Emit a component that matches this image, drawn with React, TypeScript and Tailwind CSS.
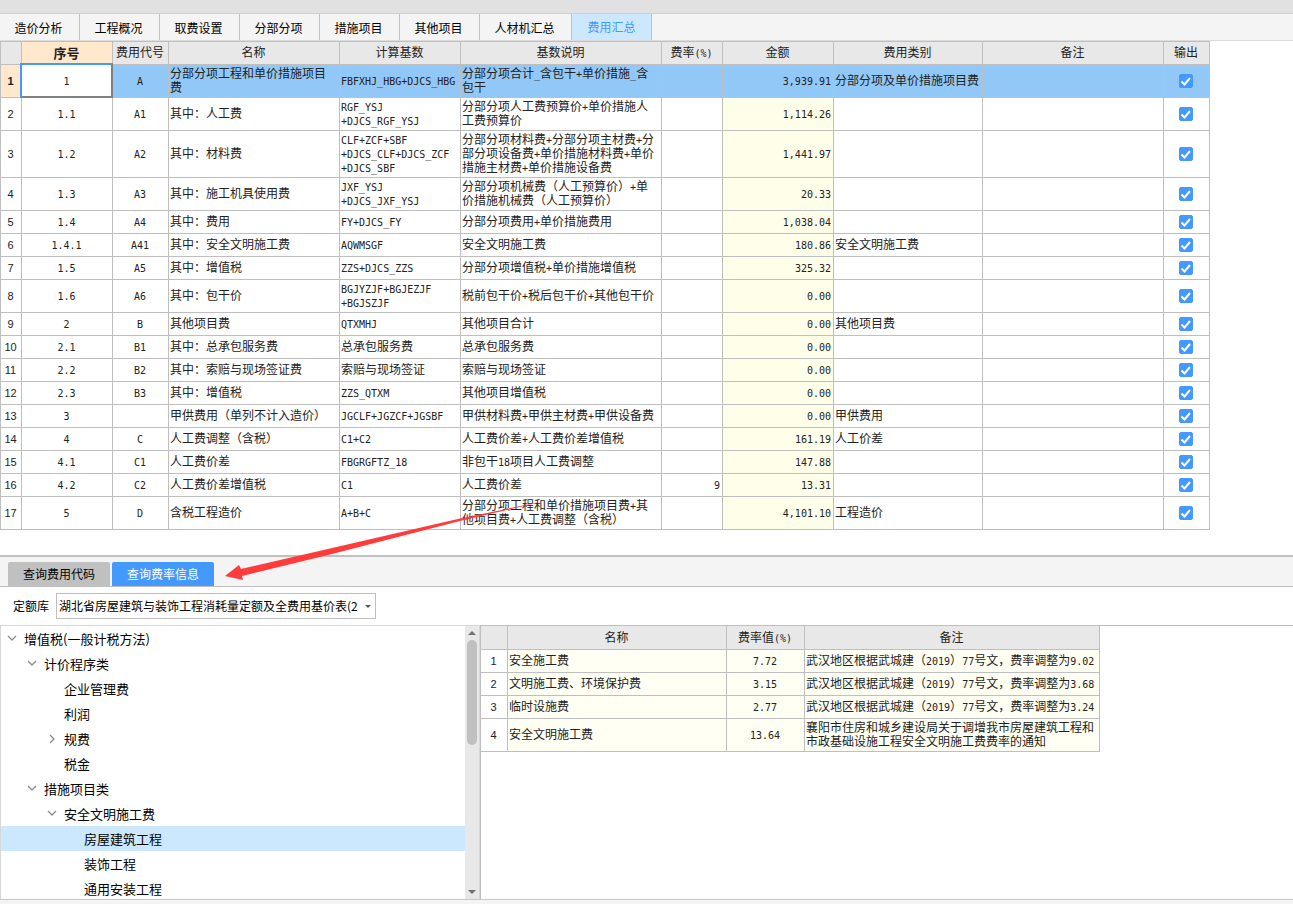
import React, { useState } from "react";
import { clsx } from "clsx";

interface FeeRow {
  no: string;
  code: string;
  name: string;
  base: string;
  desc: string;
  rate?: string;
  amount: string;
  category?: string;
}

interface RateRow {
  name: string;
  rate: string;
  remark: string;
}

interface TreeItem {
  label: string;
  level: number;
  state?: "open" | "closed";
}

const mainTabs = [
  "造价分析",
  "工程概况",
  "取费设置",
  "分部分项",
  "措施项目",
  "其他项目",
  "人材机汇总",
  "费用汇总",
];

const feeHeaders = [
  "费用代号",
  "名称",
  "计算基数",
  "基数说明",
  "费率(%)",
  "金额",
  "费用类别",
  "备注",
  "输出",
];

const feeRows: FeeRow[] = [
  { no: "1", code: "A", name: "分部分项工程和单价措施项目\n费", base: "FBFXHJ_HBG+DJCS_HBG", desc: "分部分项合计_含包干+单价措施_含\n包干", amount: "3,939.91", category: "分部分项及单价措施项目费" },
  { no: "1.1", code: "A1", name: "其中：人工费", base: "RGF_YSJ\n+DJCS_RGF_YSJ", desc: "分部分项人工费预算价+单价措施人\n工费预算价", amount: "1,114.26" },
  { no: "1.2", code: "A2", name: "其中：材料费", base: "CLF+ZCF+SBF\n+DJCS_CLF+DJCS_ZCF\n+DJCS_SBF", desc: "分部分项材料费+分部分项主材费+分\n部分项设备费+单价措施材料费+单价\n措施主材费+单价措施设备费", amount: "1,441.97" },
  { no: "1.3", code: "A3", name: "其中：施工机具使用费", base: "JXF_YSJ\n+DJCS_JXF_YSJ", desc: "分部分项机械费（人工预算价）+单\n价措施机械费（人工预算价）", amount: "20.33" },
  { no: "1.4", code: "A4", name: "其中：费用", base: "FY+DJCS_FY", desc: "分部分项费用+单价措施费用", amount: "1,038.04" },
  { no: "1.4.1", code: "A41", name: "其中：安全文明施工费", base: "AQWMSGF", desc: "安全文明施工费", amount: "180.86", category: "安全文明施工费" },
  { no: "1.5", code: "A5", name: "其中：增值税", base: "ZZS+DJCS_ZZS", desc: "分部分项增值税+单价措施增值税", amount: "325.32" },
  { no: "1.6", code: "A6", name: "其中：包干价", base: "BGJYZJF+BGJEZJF\n+BGJSZJF", desc: "税前包干价+税后包干价+其他包干价", amount: "0.00" },
  { no: "2", code: "B", name: "其他项目费", base: "QTXMHJ", desc: "其他项目合计", amount: "0.00", category: "其他项目费" },
  { no: "2.1", code: "B1", name: "其中：总承包服务费", base: "总承包服务费", desc: "总承包服务费", amount: "0.00" },
  { no: "2.2", code: "B2", name: "其中：索赔与现场签证费", base: "索赔与现场签证", desc: "索赔与现场签证", amount: "0.00" },
  { no: "2.3", code: "B3", name: "其中：增值税", base: "ZZS_QTXM", desc: "其他项目增值税", amount: "0.00" },
  { no: "3", code: "", name: "甲供费用（单列不计入造价）", base: "JGCLF+JGZCF+JGSBF", desc: "甲供材料费+甲供主材费+甲供设备费", amount: "0.00", category: "甲供费用" },
  { no: "4", code: "C", name: "人工费调整（含税）", base: "C1+C2", desc: "人工费价差+人工费价差增值税", amount: "161.19", category: "人工价差" },
  { no: "4.1", code: "C1", name: "人工费价差", base: "FBGRGFTZ_18", desc: "非包干18项目人工费调整", amount: "147.88" },
  { no: "4.2", code: "C2", name: "人工费价差增值税", base: "C1", desc: "人工费价差", rate: "9", amount: "13.31" },
  { no: "5", code: "D", name: "含税工程造价", base: "A+B+C", desc: "分部分项工程和单价措施项目费+其\n他项目费+人工费调整（含税）", amount: "4,101.10", category: "工程造价" },
];

const rateRows: RateRow[] = [
  { name: "安全施工费", rate: "7.72", remark: "武汉地区根据武城建（2019）77号文，费率调整为9.02" },
  { name: "文明施工费、环境保护费", rate: "3.15", remark: "武汉地区根据武城建（2019）77号文，费率调整为3.68" },
  { name: "临时设施费", rate: "2.77", remark: "武汉地区根据武城建（2019）77号文，费率调整为3.24" },
  { name: "安全文明施工费", rate: "13.64", remark: "襄阳市住房和城乡建设局关于调增我市房屋建筑工程和\n市政基础设施工程安全文明施工费费率的通知" },
];

const treeItems: TreeItem[] = [
  { label: "增值税(一般计税方法)", level: 0, state: "open" },
  { label: "计价程序类", level: 1, state: "open" },
  { label: "企业管理费", level: 2 },
  { label: "利润", level: 2 },
  { label: "规费", level: 2, state: "closed" },
  { label: "税金", level: 2 },
  { label: "措施项目类", level: 1, state: "open" },
  { label: "安全文明施工费", level: 2, state: "open" },
  { label: "房屋建筑工程", level: 3 },
  { label: "装饰工程", level: 3 },
  { label: "通用安装工程", level: 3 },
];

const indents = ["pl-1.5", "pl-6.5", "pl-11.5", "pl-16.5"];

const cell =
  "border-r border-b border-[#bfbfbf] py-0 pr-0.5 pl-px align-middle font-normal";

const rowHeight = (...texts: string[]) => {
  const lines = Math.max(...texts.map((text) => text.split("\n").length));
  return ["h-[23px]", "h-[33px]", "h-[47px]"][lines - 1];
};

// Latin runs are half the width of a Chinese character
const Mixed: React.FC<{ text?: string }> = ({ text = "" }) => (
  <span className="block pb-0.5">
    {text.split("\n").map((line, n) => (
      <span key={n} className="block h-3.5 leading-[14px] whitespace-nowrap">
        {line.split(/([\x21-\x7e]+)/).map((part, i) =>
          i % 2 === 1 ? (
            <span
              key={i}
              className="font-['DejaVu_Sans_Mono','Liberation_Mono',monospace] text-[10px] leading-none"
            >
              {part}
            </span>
          ) : (
            part
          )
        )}
      </span>
    ))}
  </span>
);

const OutputCheckbox: React.FC<{ label: string }> = ({ label }) => {
  const [checked, setChecked] = useState(true);

  return (
    <label className="relative mx-auto block w-3.5">
      <input
        type="checkbox"
        aria-label={label}
        checked={checked}
        onChange={() => setChecked(!checked)}
        className="block size-3.5 appearance-none rounded-xs border border-[#4499ff] bg-white checked:bg-[#4499ff]"
      />
      {checked && (
        <svg
          viewBox="0 0 14 14"
          className="pointer-events-none absolute inset-0 size-3.5"
        >
          <path d="M2.5 7.5l3 3 5.5-6.5" fill="none" stroke="white" strokeWidth="2" />
        </svg>
      )}
    </label>
  );
};

const MainTabs: React.FC = () => (
  <nav className="flex h-[27px] shrink-0 border-b border-[#dcdcdc] bg-[#f4f4f4]">
    {mainTabs.map((tab) => (
      <button
        key={tab}
        type="button"
        className={clsx(
          "border-r border-[#bfbfbf] text-xs",
          tab === "人材机汇总" ? "w-[92px]" : "w-20",
          tab === "费用汇总" ? "bg-[#cce8ff] text-[#4499ff]" : "pt-0.5 pr-0.5"
        )}
      >
        {tab}
      </button>
    ))}
  </nav>
);

const FeeTable: React.FC = () => (
  <table className="w-[1210px] table-fixed border-separate border-spacing-0 border-t border-[#bfbfbf] text-xs text-[#222222]">
    <colgroup>
      <col className="w-[22px]" />
      <col className="w-[91px]" />
      <col className="w-[56px]" />
      <col className="w-[171px]" />
      <col className="w-[121px]" />
      <col className="w-[201px]" />
      <col className="w-[61px]" />
      <col className="w-[111px]" />
      <col className="w-[149px]" />
      <col className="w-[181px]" />
      <col className="w-[46px]" />
    </colgroup>
    <thead className="bg-[#e8e8e8]">
      <tr className="h-[23px]">
        <th className={clsx(cell, "border-l")} />
        <th className={clsx(cell, "bg-[#ffe8cc] text-[13px] leading-[14px]")}>
          <b>序号</b>
        </th>
        {feeHeaders.map((header) => (
          <th key={header} className={cell}>
            <Mixed text={header} />
          </th>
        ))}
      </tr>
    </thead>
    <tbody>
      {feeRows.map((row, index) => {
        const selected = index === 0;
        return (
          <tr
            key={row.no}
            className={clsx(
              rowHeight(row.name, row.base, row.desc),
              selected ? "bg-[#91c8f7]" : "bg-white"
            )}
          >
            <th
              className={clsx(
                cell,
                "border-l font-['Liberation_Sans',sans-serif] text-[11px]",
                selected ? "bg-[#ffe8cc]" : "bg-white"
              )}
            >
              {selected ? <b>{index + 1}</b> : index + 1}
            </th>
            <td className={clsx(cell, "text-center", selected && "relative bg-white")}>
              {selected && (
                <span className="absolute -top-0.5 -right-px -bottom-px -left-0.5 border-2 border-t-[#4499ff] border-r-[#808080] border-b-[#808080] border-l-[#4499ff]" />
              )}
              <Mixed text={row.no} />
            </td>
            <td className={clsx(cell, "text-center")}>
              <Mixed text={row.code} />
            </td>
            <td className={cell}>
              <Mixed text={row.name} />
            </td>
            <td className={cell}>
              <Mixed text={row.base} />
            </td>
            <td className={cell}>
              <Mixed text={row.desc} />
            </td>
            <td className={clsx(cell, "text-right")}>
              <Mixed text={row.rate} />
            </td>
            <td className={clsx(cell, "text-right", !selected && "bg-[#ffffe9]")}>
              <Mixed text={row.amount} />
            </td>
            <td className={cell}>
              <Mixed text={row.category} />
            </td>
            <td className={cell} />
            <td className={cell}>
              <OutputCheckbox label={`输出 ${row.no}`} />
            </td>
          </tr>
        );
      })}
    </tbody>
  </table>
);

const RateTable: React.FC = () => (
  <table className="w-[619px] table-fixed border-separate border-spacing-0 text-xs text-[#222222]">
    <colgroup>
      <col className="w-[27px]" />
      <col className="w-[219px]" />
      <col className="w-[78px]" />
      <col className="w-[295px]" />
    </colgroup>
    <thead className="bg-[#e8e8e8]">
      <tr className="h-6">
        <th className={cell} />
        <th className={cell}>
          <Mixed text="名称" />
        </th>
        <th className={cell}>
          <Mixed text="费率值(%)" />
        </th>
        <th className={cell}>
          <Mixed text="备注" />
        </th>
      </tr>
    </thead>
    <tbody>
      {rateRows.map((row, index) => (
        <tr key={row.name} className={clsx(rowHeight(row.remark), "bg-[#fffff4]")}>
          <th
            className={clsx(
              cell,
              "bg-white font-['Liberation_Sans',sans-serif] text-[11px]"
            )}
          >
            {index + 1}
          </th>
          <td className={cell}>
            <Mixed text={row.name} />
          </td>
          <td className={clsx(cell, "text-center")}>
            <Mixed text={row.rate} />
          </td>
          <td className={cell}>
            <Mixed text={row.remark} />
          </td>
        </tr>
      ))}
    </tbody>
  </table>
);

const FeeTree: React.FC = () => {
  const [active, setActive] = useState("房屋建筑工程");

  return (
    <div className="flex w-[480px] shrink-0 border-t border-l border-[#d8d8d8]">
      <ul className="flex-1 overflow-hidden">
        {treeItems.map((item) => (
          <li key={item.label}>
            <button
              type="button"
              onClick={() => setActive(item.label)}
              className={clsx(
                "flex h-[25px] w-full items-center gap-[7px] text-[13px] text-black",
                indents[item.level],
                item.label === active && "bg-[#cce8ff]"
              )}
            >
              <svg viewBox="0 0 10 10" className="size-2.5 shrink-0">
                {item.state && (
                  <path
                    d={item.state === "open" ? "M1 2l4 4 4-4" : "M3 1l4 4-4 4"}
                    fill="none"
                    stroke="#8c8c8c"
                    strokeWidth="1.3"
                  />
                )}
              </svg>
              {item.label}
            </button>
          </li>
        ))}
      </ul>
      {/* Scrollbar */}
      <div className="flex w-[15px] flex-col items-center border-r border-[#d8d8d8] bg-[#e8e8e8] pt-[5px] pb-[5px]">
        <svg viewBox="0 0 8 4" className="h-1 w-2">
          <path d="M0 4l4-4 4 4z" fill="#6e6e76" />
        </svg>
        <div className="mt-[5px] h-[105px] w-2.5 rounded-full bg-[#c0c0c0]" />
        <svg viewBox="0 0 8 4" className="mt-auto h-1 w-2">
          <path d="M0 0l4 4 4-4z" fill="#6e6e76" />
        </svg>
      </div>
    </div>
  );
};

export default function App() {
  return (
    <div className="relative flex h-screen flex-col bg-white font-['Noto_Sans_CJK_SC',sans-serif] text-black">
      <div className="h-3.5 shrink-0 border-b border-[#d0d0d0] bg-[#e1e1e1]" />
      <MainTabs />
      <div className="shrink-0">
        <FeeTable />
      </div>

      <section className="mt-[25px] flex min-h-0 flex-1 flex-col border-t-2 border-[#c0c0c0]">
        <div className="flex shrink-0 gap-0.5 border-b border-[#c0c0c0] bg-[#f4f4f4] px-2 pt-[5px] text-xs">
          <button type="button" className="h-6 w-[102px] rounded-t-xs bg-[#c0c0c0]">
            查询费用代码
          </button>
          <button
            type="button"
            className="h-6 w-[102px] rounded-t-xs bg-[#4499ff] text-white"
          >
            查询费率信息
          </button>
        </div>

        <div className="flex shrink-0 items-center gap-[7px] py-1.5 pl-[13px] text-xs">
          <label htmlFor="quota">定额库</label>
          <div className="relative w-80">
            <select
              id="quota"
              className="block h-[26px] w-full appearance-none border border-[#bfbfbf] bg-white pl-0.5"
            >
              <option>湖北省房屋建筑与装饰工程消耗量定额及全费用基价表(2</option>
            </select>
            <svg
              viewBox="0 0 6 3"
              className="pointer-events-none absolute top-3 right-[5px] h-[3px] w-1.5"
            >
              <path d="M0 0h6l-3 3z" fill="#555555" />
            </svg>
          </div>
        </div>

        <div className="flex min-h-0 flex-1">
          <FeeTree />
          <div className="flex-1 border-t border-l border-[#bfbfbf]">
            <RateTable />
          </div>
        </div>
        <div className="h-[5px] shrink-0 border-t border-[#c8c8c8] bg-[#f4f4f4]" />
      </section>

      <svg
        viewBox="0 0 330 90"
        className="pointer-events-none absolute top-[495px] left-[220px] h-[90px] w-[330px]"
      >
        <path
          d="M5 81L19 70 21 74 110 53.5 240 23.5 325 6 240 26 110 59.5 22 81 23 85z"
          fill="#ff3b3b"
        />
      </svg>
    </div>
  );
}
